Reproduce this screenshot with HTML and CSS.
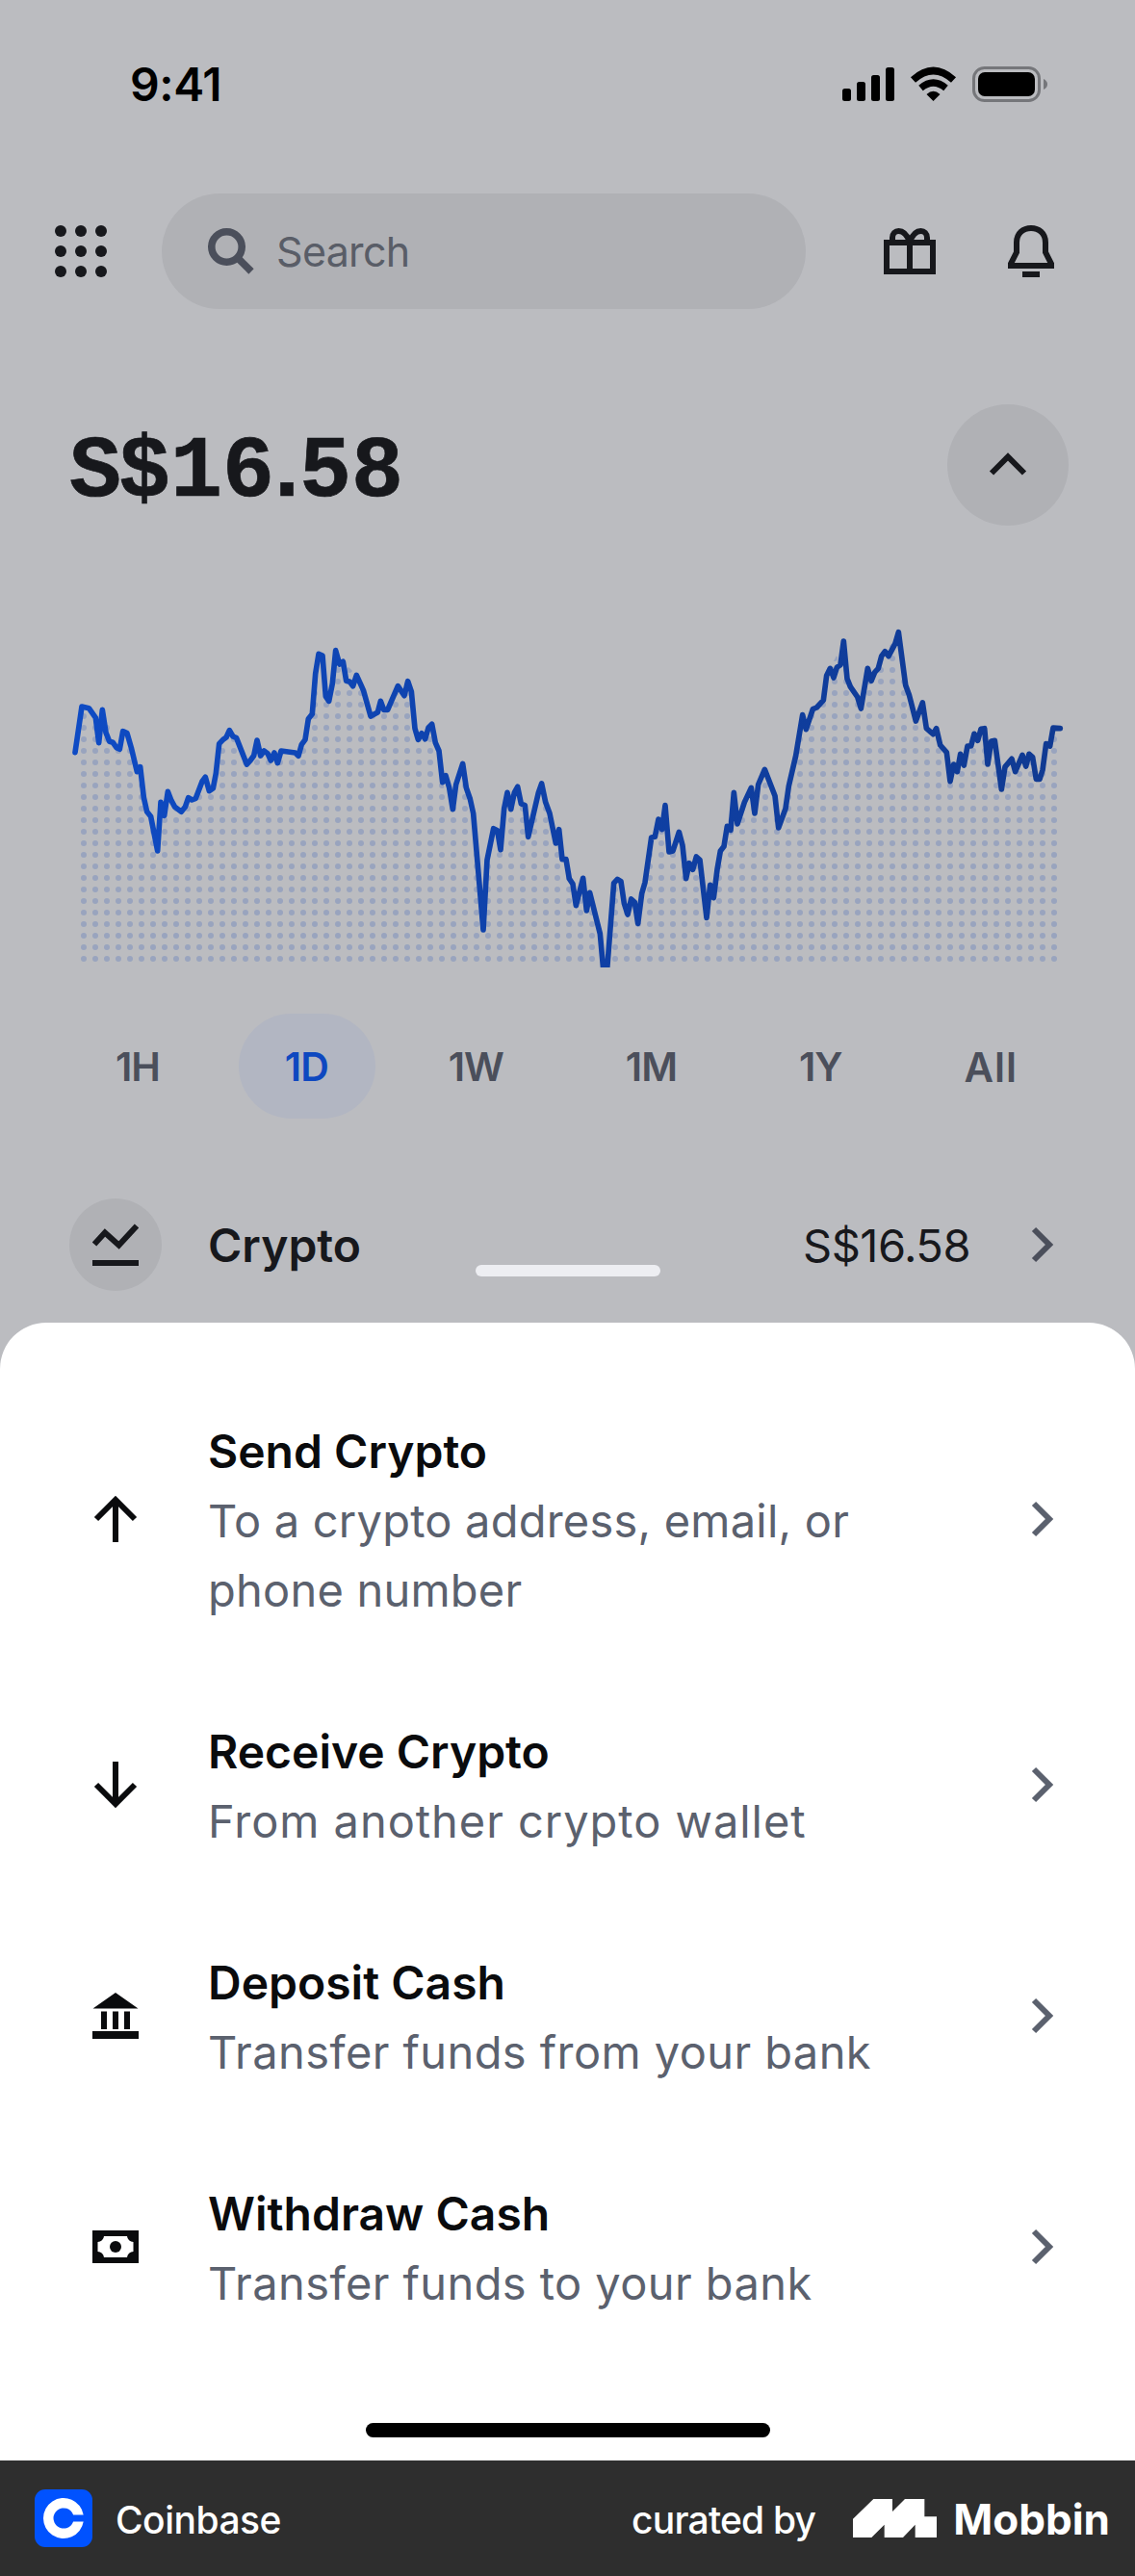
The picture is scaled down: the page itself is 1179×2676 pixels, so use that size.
FILE: index.html
```html
<!DOCTYPE html>
<html lang="en">
<head>
<meta charset="utf-8">
<title>Coinbase</title>
<link rel="stylesheet" href="styles.css">
</head>
<body>
<main class="phone">
  <section class="screen">
    <div class="status">
      <span class="time">9:41</span>
      <svg class="status-icons" width="216" height="40" viewBox="0 0 216 40">
        <rect x="0" y="23" width="9" height="13" rx="2.5"/>
        <rect x="15" y="16" width="9" height="20" rx="2.5"/>
        <rect x="30" y="9" width="9" height="27" rx="2.5"/>
        <rect x="45" y="1" width="9" height="35" rx="2.5"/>
        <path d="M94.500 36 L87.500 29 Q94.500 22.500 101.500 29 Z"/>
        <path d="M81.500 22.500 Q94.500 11.500 107.500 22.500" fill="none" stroke="#000" stroke-width="7"/>
        <path d="M73.500 14 Q94.500 -5 115.500 14" fill="none" stroke="#000" stroke-width="7.500"/>
        <rect x="136.500" y="1.500" width="68" height="34" rx="11" fill="none" stroke="#75767a" stroke-width="3"/>
        <rect x="141" y="6" width="59" height="25" rx="7"/>
        <path d="M209 13 Q213 15 213 18.500 Q213 22 209 24 Z" fill="#75767a"/>
      </svg>
    </div>

    <header class="topbar">
      <svg class="apps" width="54" height="54" viewBox="0 0 54 54">
        <circle cx="6" cy="6" r="6"/><circle cx="27" cy="6" r="6"/><circle cx="48" cy="6" r="6"/>
        <circle cx="6" cy="27" r="6"/><circle cx="27" cy="27" r="6"/><circle cx="48" cy="27" r="6"/>
        <circle cx="6" cy="48" r="6"/><circle cx="27" cy="48" r="6"/><circle cx="48" cy="48" r="6"/>
      </svg>
      <div class="search">
        <svg width="48" height="48" viewBox="0 0 48 48" fill="none" stroke="#4b4f5b">
          <circle cx="19.500" cy="19.500" r="15.700" stroke-width="7.600"/>
          <path d="M30 30 L45 45" stroke-width="7.500"/>
        </svg>
        <span class="search-text">Search</span>
      </div>
      <svg class="gift" width="54" height="54" viewBox="0 0 54 54" fill="none" stroke="#17181c" stroke-width="6">
        <path d="M3 18 H51 V48 H3 Z M27 16 V48"/>
        <path d="M9 17 V13 C9 8.500 12 6 15.500 6 C21 6 24.500 11 27 17 M45 17 V13 C45 8.500 42 6 38.500 6 C33 6 29.500 11 27 17"/>
      </svg>
      <svg class="bell" width="48" height="54" viewBox="0 0 48 54" fill="none" stroke="#17181c" stroke-width="6">
        <path d="M9 28 V18 C9 8 16 3 24 3 C32 3 39 8 39 18 V28 L45 40 V42 H3 V40 Z"/>
        <path d="M15 51 H33"/>
      </svg>
    </header>

    <div class="balance-row">
      <h1 class="balance"><span class="tight-s">S</span>$1<span class="tight-dot">6.</span>58</h1>
      <button class="collapse" aria-label="Collapse">
        <svg width="40" height="28" viewBox="0 0 40 28" fill="none" stroke="#17181c" stroke-width="6"><path d="M3 22.500 L20 5.500 L37 22.500"/></svg>
      </button>
    </div>

    <svg class="chart" width="1179" height="375" viewBox="0 0 3537 1125">
      <defs>
        <linearGradient id="stroke" gradientUnits="userSpaceOnUse" x1="234" y1="0" x2="3304" y2="0">
          <stop offset="0" stop-color="#0e4bc4"/>
          <stop offset=".5" stop-color="#0f40a6"/>
          <stop offset="1" stop-color="#103a92"/>
        </linearGradient>
        <pattern id="dots" patternUnits="userSpaceOnUse" x="-9" y="0" width="36" height="36">
          <circle cx="18" cy="18" r="9" fill="#99a4be"/>
        </pattern>
        <path id="line" d="M234 455 L255 312 277 317 298 347 308 425 319 322 330 393 341 421 352 424 363 440 373 445 383 389 396 395 409 440 427 515 437 500 448 595 458 640 470 655 491 762 501 610 512 652 523 577 534 605 545 625 565 640 577 625 587 596 598 603 610 598 630 545 640 532 652 575 664 567 673 520 683 428 695 415 705 408 715 386 726 405 737 410 769 492 780 480 791 465 801 417 812 465 823 450 834 458 844 480 855 456 865 488 876 450 898 453 920 456 930 466 940 430 951 415 961 350 973 335 983 210 993 148 1005 153 1015 280 1025 295 1036 240 1046 137 1058 180 1069 172 1079 232 1090 235 1100 248 1111 214 1125 245 1133 263 1155 342 1177 330 1186 295 1196 322 1208 322 1240 248 1260 278 1271 233 1282 265 1293 380 1303 415 1314 395 1325 413 1335 378 1346 367 1357 425 1368 450 1379 548 1389 527 1400 565 1411 632 1421 555 1442 490 1453 565 1465 600 1475 645 1506 1008 1518 790 1538 692 1550 698 1560 758 1571 630 1581 580 1592 632 1603 580 1613 562 1624 615 1636 620 1646 718 1678 580 1688 552 1700 610 1713 645 1732 738 1742 695 1752 788 1764 788 1774 848 1785 865 1795 932 1817 847 1828 948 1838 892 1870 1020 1880 1130 1892 1130 1913 862 1924 850 1935 857 1945 925 1956 960 1967 912 1978 922 1988 988 2000 895 2010 860 2030 720 2041 718 2052 663 2063 695 2073 620 2085 765 2097 762 2116 703 2127 745 2138 848 2148 800 2159 820 2170 780 2181 790 2202 970 2213 868 2224 908 2235 820 2245 762 2256 748 2266 685 2277 697 2287 580 2298 678 2320 610 2341 565 2352 645 2363 555 2383 508 2415 590 2426 690 2448 630 2458 560 2480 465 2501 338 2512 383 2533 320 2545 315 2566 292 2576 215 2587 193 2598 222 2608 190 2619 182 2629 108 2640 225 2650 250 2672 282 2683 318 2704 193 2715 232 2726 205 2737 193 2747 155 2758 140 2769 155 2790 115 2800 80 2822 245 2833 275 2854 357 2875 300 2887 380 2908 398 2918 380 2930 432 2950 455 2961 545 2972 492 2983 515 2993 460 3004 495 3015 435 3026 435 3036 397 3047 418 3057 382 3068 380 3078 492 3089 420 3100 418 3121 570 3132 500 3153 475 3164 515 3186 463 3197 498 3207 460 3218 470 3229 538 3240 538 3249 510 3260 428 3272 435 3282 378 3304 380"/>
        <clipPath id="under"><rect x="234" y="0" width="3070" height="1125"/></clipPath>
        <mask id="above" maskUnits="userSpaceOnUse" x="0" y="0" width="3537" height="1125">
          <rect width="3537" height="1125" fill="#fff"/>
          <path fill="#000" d="M0 0 H3537 V380 H3304 L3282 378 3272 435 3260 428 3249 510 3240 538 3229 538 3207 460 3186 463 3153 475 3132 500 3121 570 3100 418 3078 492 3068 380 3036 397 3004 495 2961 545 2950 455 2918 380 2887 380 2875 300 2854 357 2822 245 2800 80 2758 140 2715 232 2704 193 2683 318 2640 225 2629 108 2587 193 2566 292 2533 320 2512 383 2501 338 2480 465 2448 630 2426 690 2415 590 2383 508 2352 645 2341 565 2298 678 2287 580 2266 685 2245 762 2224 908 2202 970 2181 790 2138 848 2116 703 2085 765 2073 620 2030 720 2000 895 1988 988 1956 960 1935 857 1913 862 1892 1130 1880 1130 1870 1020 1838 892 1817 847 1795 932 1774 848 1752 788 1732 738 1688 552 1646 718 1613 562 1581 580 1560 758 1538 692 1518 790 1506 1008 1475 645 1442 490 1411 632 1379 548 1346 367 1303 415 1293 380 1271 233 1240 248 1208 322 1155 342 1111 214 1069 172 1046 137 1025 295 1005 153 993 148 973 335 930 466 876 450 865 488 801 417 769 492 715 386 683 428 664 567 640 532 565 640 523 577 491 762 458 640 427 515 396 395 373 445 319 322 308 425 277 317 255 312 234 455 H0 Z"/>
        </mask>
      </defs>
      <g clip-path="url(#under)"><rect width="3537" height="1125" fill="url(#dots)" mask="url(#above)"/></g>
      <use href="#line" fill="none" stroke="url(#stroke)" stroke-width="17" stroke-linejoin="round" stroke-linecap="round"/>
    </svg>

    <nav class="ranges">
      <span class="range">1H</span>
      <span class="range active">1D</span>
      <span class="range">1W</span>
      <span class="range">1M</span>
      <span class="range">1Y</span>
      <span class="range all">All</span>
    </nav>

    <div class="asset">
      <div class="asset-icon">
        <svg width="48" height="48" viewBox="0 0 48 48" fill="none" stroke="#17181c" stroke-width="6"><path d="M2 23.500 L13 11.500 L27.500 24.500 L46 4.500 M0 43 H48"/></svg>
      </div>
      <span class="asset-name">Crypto</span>
      <span class="asset-value">S$16.58</span>
      <svg class="chev dim" width="24" height="38" viewBox="0 0 24 38"><path d="M3 3 L19 19 L3 35"/></svg>
    </div>
    <div class="grabber"></div>
  </section>

  <section class="sheet">
    <div class="action">
      <svg class="action-icon" width="48" height="48" viewBox="0 0 48 48" fill="none" stroke="#0a0b0d" stroke-width="6"><path d="M24 48 V5 M4 24 L24 4 L44 24"/></svg>
      <div class="action-text send"><h2>Send Crypto</h2><p>To a crypto address, email, or phone number</p></div>
      <svg class="chev" width="24" height="38" viewBox="0 0 24 38"><path d="M3 3 L19 19 L3 35"/></svg>
    </div>
    <div class="action">
      <svg class="action-icon" width="48" height="48" viewBox="0 0 48 48" fill="none" stroke="#0a0b0d" stroke-width="6"><path d="M24 0 V43 M4 24 L24 44 L44 24"/></svg>
      <div class="action-text receive"><h2>Receive Crypto</h2><p>From another crypto wallet</p></div>
      <svg class="chev" width="24" height="38" viewBox="0 0 24 38"><path d="M3 3 L19 19 L3 35"/></svg>
    </div>
    <div class="action">
      <svg class="action-icon" width="48" height="48" viewBox="0 0 48 48" fill="#0a0b0d"><path d="M24 0 L47.500 16.500 H.5 Z M9 19.500 h6 v18.500 h-6 Z M21 19.500 h6 v18.500 h-6 Z M33 19.500 h6 v18.500 h-6 Z M0 40 H48 V48 H0 Z"/></svg>
      <div class="action-text"><h2>Deposit Cash</h2><p>Transfer funds from your bank</p></div>
      <svg class="chev" width="24" height="38" viewBox="0 0 24 38"><path d="M3 3 L19 19 L3 35"/></svg>
    </div>
    <div class="action">
      <svg class="action-icon" width="48" height="34" viewBox="0 0 48 34"><rect width="48" height="34" fill="#0a0b0d"/><path d="M12 6 H36 A6.500 6.500 0 0 0 42.500 12 V22 A6.500 6.500 0 0 0 36 28 H12 A6.500 6.500 0 0 0 5.500 22 V12 A6.500 6.500 0 0 0 12 6 Z" fill="#fff"/><circle cx="24" cy="17" r="6" fill="#0a0b0d"/></svg>
      <div class="action-text"><h2>Withdraw Cash</h2><p>Transfer funds to your bank</p></div>
      <svg class="chev" width="24" height="38" viewBox="0 0 24 38"><path d="M3 3 L19 19 L3 35"/></svg>
    </div>
    <div class="home"></div>
  </section>

  <footer class="credit">
    <svg width="60" height="60" viewBox="0 0 60 60"><rect width="60" height="60" rx="11" fill="#0052ff"/><path d="M50.700 26.500 A21 21 0 1 0 50.700 33.500 H40.100 A10.600 10.600 0 1 1 40.100 26.500 Z" fill="#fff"/></svg>
    <span class="app-name">Coinbase</span>
    <span class="curated">curated by</span>
    <svg class="mobbin-logo" width="87" height="40" viewBox="48 108 261 120"><path fill="#fff" d="M48 170 L112 108 H171 V147 L210 108 H271 V163 H309 V228 H242 V188 L204 228 H146 V188 L106 228 H48 Z"/></svg>
    <span class="mobbin">Mobbin</span>
  </footer>
</main>
</body>
</html>
```
FILE: styles.css
```css
* { box-sizing: border-box; margin: 0; padding: 0; }
body { width: 1179px; font-family: Inter, "Liberation Sans", sans-serif; background: #bbbcc0; }
svg { display: block; flex: none; }
.phone { width: 1179px; height: 2676px; background: #bbbcc0; }
.screen { position: relative; height: 1374px; color: #17181c; }

.status { display: flex; align-items: center; justify-content: space-between; height: 176px; padding: 0 88px 0 135px; }
.time { font-size: 48px; font-weight: 600; color: #000; line-height: 60px; letter-spacing: -.4px; }
.status-icons { margin-top: 2px; }

.topbar { display: flex; align-items: center; height: 120px; margin-top: 25px; padding-left: 57px; }
.apps { fill: #17181c; }
.search { display: flex; align-items: center; width: 669px; height: 120px; margin-left: 57px; padding-left: 48px; border-radius: 60px; background: #b0b1b5; }
.search-text { margin-left: 23px; font-size: 43px; color: #595d67; letter-spacing: -.7px; }
.gift { margin-left: 81px; }
.bell { margin-left: 75px; }

.balance-row { display: flex; align-items: center; justify-content: space-between; height: 126px; margin-top: 99px; padding: 0 69px 0 72px; }
.balance { padding-top: 16px; font: bold 90px/110px "Liberation Mono", monospace; -webkit-text-stroke: .7px #17181c; white-space: nowrap; }
.tight-s { letter-spacing: -3px; }
.tight-dot { letter-spacing: -14px; }
.collapse { display: flex; align-items: center; justify-content: center; width: 126px; height: 126px; border: 0; border-radius: 50%; background: #b0b1b5; }

.chart { margin-top: 84px; }

.ranges { display: flex; justify-content: space-between; height: 109px; margin-top: 48px; padding: 0 72px; }
.range { padding: 0 48px; border-radius: 55px; font-size: 41px; font-weight: 600; line-height: 111px; color: #4b4f5b; letter-spacing: -1px; }
.range.active { margin: 0 -3px 0 3px; padding: 0 49px 0 48px; color: #0e48c0; background: #b2b6c2; }
.range.all { padding-right: 50px; letter-spacing: 1px; font-size: 42px; }

.asset { display: flex; align-items: center; height: 96px; margin-top: 83px; padding: 0 84px 0 72px; }
.asset-icon { display: flex; align-items: center; justify-content: center; width: 96px; height: 96px; border-radius: 50%; background: #b0b1b5; }
.asset-name { margin-left: 48px; font-size: 48px; font-weight: 600; }
.asset-value { margin-left: auto; font-size: 47px; letter-spacing: -.5px; }
.chev { width: 24px; height: 38px; fill: none; stroke: #5b616e; stroke-width: 6px; }
.chev.dim { margin-left: 63px; stroke: #4b4f5b; }
.grabber { position: absolute; left: 494px; top: 1314px; width: 192px; height: 12px; border-radius: 6px; background: #edeef2; }

.sheet { height: 1182px; padding-top: 48px; border-radius: 48px 48px 0 0; background: #fff; }
.action { display: flex; align-items: center; padding: 48px 84px 48px 96px; }
.action-text { width: 720px; margin: 2px auto -2px 72px; font-size: 47px; line-height: 72px; letter-spacing: .42px; color: #5b616e; }
.action-text.send { letter-spacing: .22px; }
.action-text.receive { letter-spacing: .95px; }
.action-text h2 { font-size: 48px; font-weight: 600; letter-spacing: 0; color: #0a0b0d; }
.home { width: 420px; height: 15px; margin: 63px auto 0; border-radius: 8px; background: #000; }

.credit { display: flex; align-items: center; height: 120px; padding: 0 26px 0 36px; background: #2e2e2e; color: #fff; }
.app-name { margin-left: 24px; padding-top: 2px; font-size: 39px; font-weight: 500; letter-spacing: -.5px; }
.curated { margin-left: auto; padding-top: 2px; font-size: 39px; font-weight: 500; letter-spacing: -.8px; }
.mobbin-logo { margin-left: 39px; }
.mobbin { margin-left: 17px; padding-top: 2px; font-size: 44px; font-weight: 700; }
```
